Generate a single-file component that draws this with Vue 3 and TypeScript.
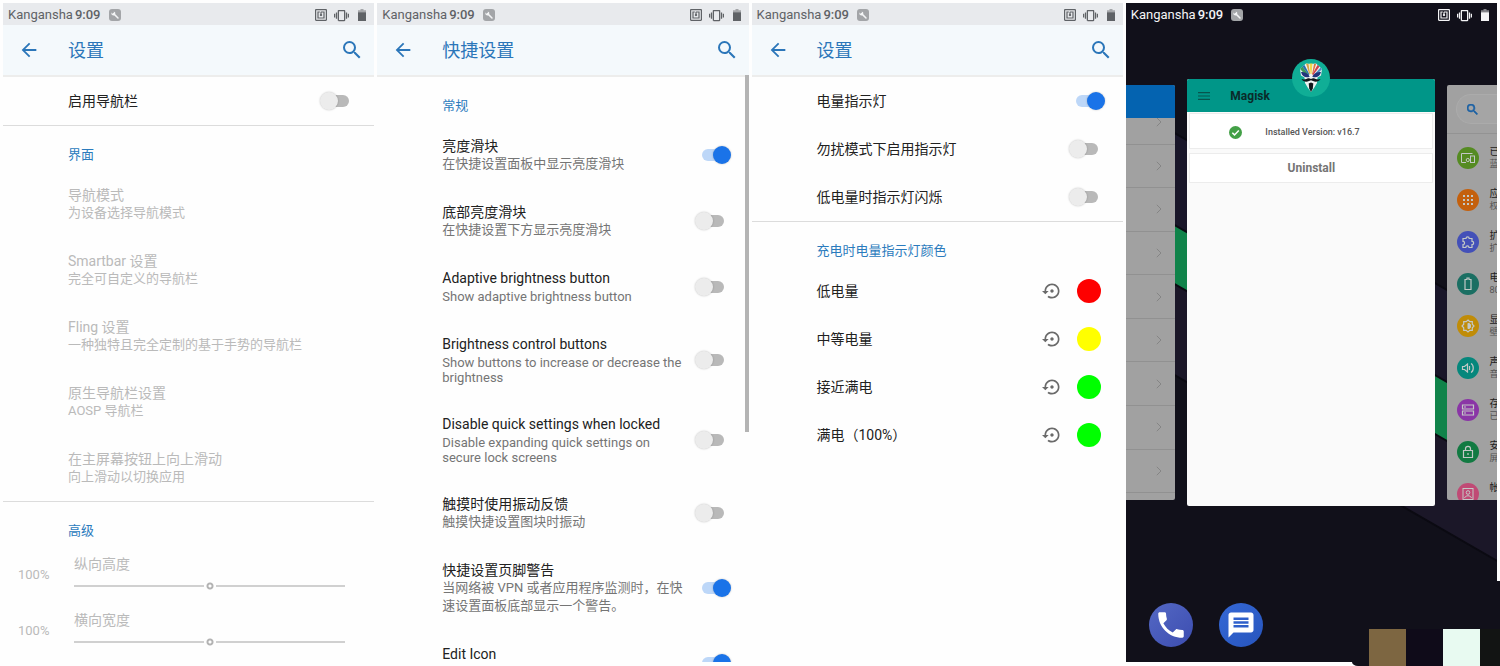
<script setup lang="ts">
import { ref } from 'vue'

interface Toggle {
  title: string
  summary?: string
  on: boolean
}

interface StatusTone {
  dark: boolean
}

const bars = [
  { title: '设置' },
  { title: '快捷设置' },
  { title: '设置' },
]

const statusTones: StatusTone[] = [{ dark: false }, { dark: false }, { dark: false }, { dark: true }]

const navEnabled = ref(false)

const navItems = [
  { title: '导航模式', summary: '为设备选择导航模式' },
  { title: 'Smartbar 设置', summary: '完全可自定义的导航栏' },
  { title: 'Fling 设置', summary: '一种独特且完全定制的基于手势的导航栏' },
  { title: '原生导航栏设置', summary: 'AOSP 导航栏' },
  { title: '在主屏幕按钮上向上滑动', summary: '向上滑动以切换应用' },
]

const sliders = ref([
  { id: 'nav-height', title: '纵向高度', value: 100 },
  { id: 'nav-width', title: '横向宽度', value: 100 },
])

const quickToggles = ref<Toggle[]>([
  { title: '亮度滑块', summary: '在快捷设置面板中显示亮度滑块', on: true },
  { title: '底部亮度滑块', summary: '在快捷设置下方显示亮度滑块', on: false },
  { title: 'Adaptive brightness button', summary: 'Show adaptive brightness button', on: false },
  { title: 'Brightness control buttons', summary: 'Show buttons to increase or decrease the brightness', on: false },
  { title: 'Disable quick settings when locked', summary: 'Disable expanding quick settings on secure lock screens', on: false },
  { title: '触摸时使用振动反馈', summary: '触摸快捷设置图块时振动', on: false },
  { title: '快捷设置页脚警告', summary: '当网络被 VPN 或者应用程序监测时，在快速设置面板底部显示一个警告。', on: true },
  { title: 'Edit Icon', on: true },
])

const isLatin = (s: string): boolean => /^[\x20-\x7e]+$/.test(s)

const lightToggles = ref<Toggle[]>([
  { title: '电量指示灯', on: true },
  { title: '勿扰模式下启用指示灯', on: false },
  { title: '低电量时指示灯闪烁', on: false },
])

const colors = [
  { title: '低电量', color: '#fe0000' },
  { title: '中等电量', color: '#ffff00' },
  { title: '接近满电', color: '#00ff00' },
  { title: '满电（100%）', color: '#00ff00' },
]

const settings = [
  { kind: 'devices', color: '#558b22', title: '已', summary: '蓝' },
  { kind: 'apps', color: '#c4600d', title: '应', summary: '权' },
  { kind: 'extension', color: '#4350b8', title: '扩', summary: '扩' },
  { kind: 'battery', color: '#1b6f63', title: '电', summary: '80' },
  { kind: 'display', color: '#c08c08', title: '显', summary: '壁' },
  { kind: 'sound', color: '#06877c', title: '声', summary: '音' },
  { kind: 'storage', color: '#8a35a6', title: '存', summary: '已' },
  { kind: 'lock', color: '#127a42', title: '安', summary: '屏' },
  { kind: 'account', color: '#c04a75', title: '帐', summary: '' },
]
</script>

<template>
  <main class="board">
    <section v-for="(tone, i) in statusTones" :key="i" class="screen" :class="{ home: tone.dark }">
      <svg v-if="tone.dark" class="wallpaper" viewBox="0 0 371 659" preserveAspectRatio="none" aria-hidden="true">
        <rect width="371" height="659" fill="#11101a" />
        <path d="M0 102 371 316V408L0 194z" fill="#191629" />
        <path d="M0 194 371 408V467L0 253z" fill="#10834a" />
        <path d="M0 253 371 467V558L0 344z" fill="#1b1728" />
        <path d="M0 194 371 408M0 253 371 467M0 344 371 558M0 102 371 316" stroke="#0b0a12" stroke-width="2" />
      </svg>

      <header class="status">
        <span class="carrier">Kangansha</span>
        <span class="clock">9:09</span>
        <svg class="badge" viewBox="0 0 12 12" aria-hidden="true">
          <rect width="12" height="12" rx="3" class="badge-bg" />
          <path d="M4.6 4.6 9 9" stroke="#f4f5f6" stroke-width="1.5" stroke-linecap="round" />
          <path d="M2.6 3.4a2 2 0 1 0 2.2-1L5 4 3.9 5z" fill="#f4f5f6" />
        </svg>
        <span class="spacer"></span>
        <svg class="nfc" viewBox="2 2 20 20" aria-hidden="true">
          <path fill="currentColor" d="M20 2H4c-1.1 0-2 .9-2 2v16c0 1.1.9 2 2 2h16c1.1 0 2-.9 2-2V4c0-1.1-.9-2-2-2zm0 18H4V4h16v16zM18 6h-5c-1.1 0-2 .9-2 2v2.28c-.6.35-1 .98-1 1.72 0 1.1.9 2 2 2s2-.9 2-2c0-.74-.4-1.38-1-1.72V8h3v8H8V8h2V6H6v12h12V6z" />
        </svg>
        <svg class="vibrate" viewBox="0 0 24 24" aria-hidden="true">
          <path fill="currentColor" d="M0 15h2V9H0v6zm3 2h2V7H3v10zm19-8v6h2V9h-2zm-3 8h2V7h-2v10zM16.5 3h-9C6.67 3 6 3.67 6 4.5v15c0 .83.67 1.5 1.5 1.5h9c.83 0 1.5-.67 1.5-1.5v-15c0-.83-.67-1.5-1.5-1.5zM16 19H8V5h8v14z" />
        </svg>
        <svg class="power" viewBox="0 0 8 12" aria-hidden="true">
          <path fill="currentColor" opacity=".5" d="M2.5 0h3v1.3H8V4H0V1.3h2.5z" />
          <path fill="currentColor" d="M0 3.4h8V12H0z" />
        </svg>
      </header>

      <header v-if="!tone.dark" class="appbar">
        <button type="button" class="icon-btn back" aria-label="返回">
          <svg viewBox="0 0 24 24" width="22" height="22"><path fill="currentColor" d="M20 11H7.83l5.59-5.59L12 4l-8 8 8 8 1.41-1.41L7.83 13H20v-2z" /></svg>
        </button>
        <h1>{{ bars[i].title }}</h1>
        <button type="button" class="icon-btn" aria-label="搜索">
          <svg viewBox="0 0 24 24" width="24" height="24"><path fill="currentColor" d="M15.5 14h-.79l-.28-.27A6.47 6.47 0 0 0 16 9.5 6.5 6.5 0 1 0 9.5 16c1.61 0 3.09-.59 4.23-1.57l.27.28v.79l5 4.99L20.49 19l-4.99-5zm-6 0C7.01 14 5 11.99 5 9.5S7.01 5 9.5 5 14 7.01 14 9.5 11.99 14 9.5 14z" /></svg>
        </button>
      </header>

      <div v-if="i === 0" class="body">
        <label class="row single">
          <span class="title">启用导航栏</span>
          <input v-model="navEnabled" type="checkbox" role="switch" class="switch" />
        </label>
        <hr />
        <h2>界面</h2>
        <button v-for="item in navItems" :key="item.title" type="button" class="row" disabled>
          <span class="texts">
            <span class="title">{{ item.title }}</span>
            <span class="summary">{{ item.summary }}</span>
          </span>
        </button>
        <hr />
        <h2>高级</h2>
        <div v-for="s in sliders" :key="s.id" class="slider-row">
          <output :for="s.id">{{ s.value }}%</output>
          <div class="slider">
            <label :for="s.id">{{ s.title }}</label>
            <input :id="s.id" v-model.number="s.value" type="range" min="50" max="150" disabled />
          </div>
        </div>
      </div>

      <div v-else-if="i === 1" class="body">
        <h2>常规</h2>
        <label v-for="t in quickToggles" :key="t.title" class="row">
          <span class="texts">
            <span class="title">{{ t.title }}</span>
            <span class="summary" :class="{ latin: isLatin(t.summary ?? '') }">{{ t.summary }}</span>
          </span>
          <input v-model="t.on" type="checkbox" role="switch" class="switch" />
        </label>
        <div class="scrollbar"></div>
      </div>

      <div v-else-if="i === 2" class="body">
        <label v-for="t in lightToggles" :key="t.title" class="row single">
          <span class="title">{{ t.title }}</span>
          <input v-model="t.on" type="checkbox" role="switch" class="switch" />
        </label>
        <hr />
        <h2>充电时电量指示灯颜色</h2>
        <div v-for="c in colors" :key="c.title" class="row single color-row">
          <span class="title">{{ c.title }}</span>
          <button type="button" class="icon-btn reset" :aria-label="'重置' + c.title">
            <svg viewBox="0 0 24 24" width="20" height="20"><path fill="currentColor" d="M14 12c0-1.1-.9-2-2-2s-2 .9-2 2 .9 2 2 2 2-.9 2-2zm-2-9c-4.97 0-9 4.03-9 9H0l4 4 4-4H5c0-3.87 3.13-7 7-7s7 3.13 7 7-3.13 7-7 7c-1.51 0-2.91-.49-4.06-1.3l-1.42 1.44C8.04 20.3 9.94 21 12 21c4.97 0 9-4.03 9-9s-4.03-9-9-9z" /></svg>
          </button>
          <button type="button" class="swatch" :aria-label="c.title" :style="{ backgroundColor: c.color }"></button>
        </div>
      </div>

      <template v-else>
        <div class="recents">
          <article class="card side">
            <div class="blue-bar"></div>
            <ul class="chevrons">
              <li v-for="n in 9" :key="n">
                <svg viewBox="0 0 6 10" width="6" height="10" aria-hidden="true"><path d="M.8.8 5 5 .8 9.2" fill="none" stroke="#858585" /></svg>
              </li>
            </ul>
          </article>

          <article class="card magisk">
            <svg class="app-icon" viewBox="0 0 38 38" aria-hidden="true">
              <circle cx="19" cy="19" r="19" fill="#10ae96" />
              <path d="M8 10 14 4.500 19 5l5-.5L30 10l-1 6.500-3.500 2L25 24l-3 5-3 4-3-4-3-5-.5-5.500L9 16.500z" fill="#eef3f2" />
              <path d="m8 10 2.500-2.500L17 16l-2 1.500z" fill="#3f9a5a" />
              <path d="M10.500 7.500 12.500 6l5 9.500-.8.500z" fill="#2c6fae" />
              <path d="M14 4.500 16.500 5l1.700 10-1.200-.5z" fill="#d9a640" />
              <path d="M17.500 4.500h3L19.500 15h-1z" fill="#f0d94e" />
              <path d="m22 5 2.200-.5-3.200 10.500-1 .5z" fill="#e0763a" />
              <path d="m25.500 6 2 1.500-6.500 9-.5-1.500z" fill="#cf3f4b" />
              <path d="m28.500 8.500 1.500 1.700-7 7-1.300-1z" fill="#4f8fc0" />
              <path d="M9 13c4 0 7 1.200 8.700 4.800-3.700 1.400-7.500.2-8.700-4.800z" fill="#22347c" />
              <path d="M29 13c-4 0-7 1.200-8.700 4.800 3.700 1.400 7.500.2 8.700-4.800z" fill="#22347c" />
              <path d="M9.500 20c2 .8 3.500.5 5.500-.3 1.500-.6 2.700-.5 4 .4 1.300-.9 2.500-1 4-.4 2 .8 3.500 1.100 5.500.3-1.500 2.800-5 3.300-7.500 2l-2-.7-2 .7c-2.500 1.300-6 .8-7.500-2z" fill="#10171a" />
              <path d="M16.700 24.500 19 23.500l2.300 1-.5 5L19 33l-1.800-3.500z" fill="#10171a" />
            </svg>
            <div class="teal-bar">
              <svg viewBox="0 0 12 8" width="12" height="8" aria-hidden="true"><path d="M0 .7h12M0 4h12M0 7.300h12" stroke="#07544d" stroke-width="1.200" /></svg>
              <strong>Magisk</strong>
            </div>
            <div class="tile version">
              <svg viewBox="0 0 13 13" width="13" height="13" aria-hidden="true"><circle cx="6.500" cy="6.500" r="6.500" fill="#43a047" /><path d="m3.300 6.700 2.200 2.200 4.300-4.500" fill="none" stroke="#fff" stroke-width="1.500" /></svg>
              <span>Installed Version: v16.7</span>
            </div>
            <button type="button" class="tile uninstall">Uninstall</button>
          </article>

          <article class="card side settings">
            <div class="search-head">
              <div class="pill">
                <svg viewBox="3 3 18 18" width="11" height="11" aria-hidden="true"><path fill="#1d62a5" stroke="#1d62a5" d="M15.5 14h-.79l-.28-.27A6.47 6.47 0 0 0 16 9.5 6.5 6.5 0 1 0 9.5 16c1.61 0 3.09-.59 4.23-1.57l.27.28v.79l5 4.99L20.49 19l-4.99-5zm-6 0C7.01 14 5 11.99 5 9.5S7.01 5 9.5 5 14 7.01 14 9.5 11.99 14 9.5 14z" /></svg>
              </div>
            </div>
            <ul class="entries">
              <li v-for="s in settings" :key="s.kind">
                <svg viewBox="0 0 22 22" width="22" height="22" fill="none" stroke="#c3c8c6" aria-hidden="true">
                  <circle cx="11" cy="11" r="11" :fill="s.color" stroke="none" />
                  <template v-if="s.kind === 'devices'">
                    <path d="M15.500 6.500h-11v9H9" />
                    <circle cx="10.800" cy="13" r="1.600" />
                    <rect x="13.500" y="9" width="4" height="6.500" />
                  </template>
                  <path v-else-if="s.kind === 'apps'" d="M6 7h2m2 0h2m2 0h2M6 11h2m2 0h2m2 0h2M6 15h2m2 0h2m2 0h2" stroke-width="2" />
                  <path v-else-if="s.kind === 'extension'" d="M6 7.500h3a1.600 1.600 0 1 1 3.200 0H15v2.800a1.700 1.700 0 1 1 0 3.400V16.500h-3a1.600 1.600 0 0 0-3.200 0H6v-3a1.600 1.600 0 0 0 0-3.200z" stroke-width="1.200" />
                  <path v-else-if="s.kind === 'battery'" d="M8 6.500h2V5h2v1.500h2v10H8z" stroke-width="1.200" />
                  <template v-else-if="s.kind === 'display'">
                    <path d="m11 5 1.800 1.700h2.500v2.500L17 11l-1.700 1.800v2.500h-2.500L11 17l-1.800-1.700H6.700v-2.500L5 11l1.700-1.800V6.700h2.500z" stroke-width="1.200" />
                    <path d="M11 8.300a2.700 2.700 0 0 1 0 5.400z" fill="#c3c8c6" />
                  </template>
                  <path v-else-if="s.kind === 'sound'" d="M5.500 9.500h2l3-2.500v8l-3-2.500h-2zM12.500 9v4M14 6.500c3 1.500 3 7.500 0 9" stroke-width="1.200" />
                  <path v-else-if="s.kind === 'storage'" d="M5.500 6h11v4h-11zM5.500 12h11v4h-11zM7 8h2M7 14h2" stroke-width="1.200" />
                  <path v-else-if="s.kind === 'lock'" d="M6.500 9.500h9v7h-9zM8.500 9.500V7.800a2.500 2.500 0 0 1 5 0v1.700M11 12v2" stroke-width="1.200" />
                  <template v-else>
                    <rect x="6" y="5.500" width="10" height="11" />
                    <circle cx="11" cy="9.500" r="1.800" />
                    <path d="M7.500 15c1-3 6-3 7 0" />
                  </template>
                </svg>
                <span class="entry-text"><b>{{ s.title }}</b><small>{{ s.summary }}</small></span>
              </li>
            </ul>
          </article>
        </div>

        <nav class="dock">
          <button type="button" class="phone" aria-label="电话">
            <svg viewBox="0 0 24 24" width="34" height="34"><path fill="#fff" d="M6.620 10.790c1.440 2.830 3.760 5.140 6.590 6.590l2.200-2.200c.27-.27.67-.36 1.020-.24 1.120.37 2.330.57 3.570.57.55 0 1 .45 1 1V20c0 .55-.45 1-1 1-9.390 0-17-7.610-17-17 0-.55.45-1 1-1h3.500c.55 0 1 .45 1 1 0 1.250.2 2.450.57 3.570.11.35.03.74-.25 1.020l-2.200 2.200z" /></svg>
          </button>
          <button type="button" class="message" aria-label="信息">
            <svg viewBox="0 0 24 24" width="30" height="30"><path fill="#fff" d="M20 2H4c-1.100 0-2 .9-2 2v18l4-4h14c1.100 0 2-.9 2-2V4c0-1.100-.9-2-2-2zM6 9h12v2H6V9zm12 5H6v-2h12v2zm0-6H6V6h12v2z" /></svg>
          </button>
        </nav>
      </template>
    </section>

    <div class="corner" aria-hidden="true">
      <i class="sand"></i><i class="night"></i><i class="mint"></i><i class="coal"></i>
    </div>
  </main>
</template>

<style>
body {
  margin: 0;
  background: #fefefe;
}
</style>

<style scoped>
.board {
  position: relative;
  display: grid;
  grid-template-columns: repeat(4, minmax(0, 1fr));
  gap: 3px;
  box-sizing: border-box;
  height: 100vh;
  padding: 3px 3px 4px;
  overflow: hidden;
  font-family: Roboto, "Noto Sans CJK SC", sans-serif;
  color: #212121;
}

button {
  border: 0;
  padding: 0;
  background: none;
  font: inherit;
  color: inherit;
  text-align: left;
}

svg {
  display: block;
  flex: none;
}

.screen {
  position: relative;
  display: flex;
  flex-direction: column;
  min-height: 0;
  overflow: hidden;
  background: #fefefe;
}

/* status bar */
.status {
  position: relative;
  display: flex;
  align-items: center;
  box-sizing: border-box;
  flex: none;
  height: 22px;
  padding: 2px 8px 0 5px;
  background: #e8eaed;
  color: #5f6266;
  font-size: 13px;
  line-height: 20px;
}

.clock {
  margin: 0 8px 0 2px;
  font-weight: 500;
}

.badge {
  width: 12px;
  height: 12px;
}

.badge-bg {
  fill: #a3a5a8;
}

.spacer {
  flex: 1;
}

.nfc {
  width: 12px;
  height: 12px;
}

.vibrate {
  width: 15px;
  height: 15px;
  margin: 0 9px 0 7px;
}

.power {
  width: 8px;
  height: 12px;
}

.home .status {
  background: none;
  color: #f4f4f6;
}

/* app bar */
.appbar {
  display: flex;
  align-items: center;
  flex: none;
  height: 50px;
  padding: 0 10px 0 15px;
  border-bottom: 2px solid #ededec;
  background: #f4f9fc;
  color: #2b76b9;
}

.icon-btn {
  flex: none;
}

.appbar h1 {
  flex: 1;
  margin: 0 0 0 28px;
  padding-top: 2px;
  font-size: 18px;
  font-weight: 400;
  line-height: 24px;
}

/* preference lists */
.body {
  position: relative;
  flex: 1;
  min-height: 0;
}

h2 {
  margin: 0;
  padding: 20px 18px 7px 65px;
  color: #2b7bbd;
  font-size: 13px;
  font-weight: 400;
  line-height: 18px;
}

hr {
  height: 1px;
  margin: 0;
  border: 0;
  background: #dcdcdc;
}

.row {
  display: flex;
  align-items: center;
  box-sizing: border-box;
  width: 100%;
  min-height: 66px;
  padding: 15px 18px 15px 65px;
}

.row.single {
  min-height: 48px;
  padding-top: 0;
  padding-bottom: 0;
}

.row .texts {
  flex: 1;
}

.row .title {
  display: block;
  flex: 1;
  font-size: 14px;
  line-height: 18px;
}

.row .summary {
  display: block;
  box-sizing: border-box;
  max-width: 244px;
  min-height: 18px;
  color: #757575;
  font-size: 13px;
  line-height: 18px;
}

.row .summary.latin {
  padding-top: 2px;
  line-height: 15px;
}

.row:disabled,
.row:disabled .summary {
  color: #bababa;
}

.switch {
  position: relative;
  flex: none;
  width: 36px;
  height: 18px;
  margin: 0 0 0 8px;
  appearance: none;
}

.switch::before {
  content: "";
  position: absolute;
  inset: 3px 7px;
  border-radius: 6px;
  background: #b9b9b9;
}

.switch::after {
  content: "";
  position: absolute;
  top: 0;
  left: 0;
  width: 18px;
  height: 18px;
  border-radius: 50%;
  background: #ececec;
  box-shadow: 0 0 2px rgba(0, 0, 0, 0.25);
}

.switch:checked::before {
  background: #bdd7f8;
}

.switch:checked::after {
  left: 18px;
  background: #1a73e8;
}

.slider-row {
  display: flex;
  align-items: center;
  height: 56px;
  padding: 0 29px 0 15px;
  color: #bababa;
}

.slider-row output {
  width: 56px;
  font-size: 13px;
  line-height: 18px;
}

.slider {
  flex: 1;
  padding-bottom: 3px;
}

.slider label {
  display: block;
  margin-bottom: 7px;
  font-size: 14px;
  line-height: 18px;
}

.slider input {
  display: block;
  width: 100%;
  height: 12px;
  margin: 0;
  appearance: none;
  background: none;
}

.slider input::-webkit-slider-runnable-track {
  height: 12px;
  background: linear-gradient(#d0d0d0, #d0d0d0) center / 100% 2px no-repeat;
}

.slider input::-webkit-slider-thumb {
  appearance: none;
  width: 12px;
  height: 12px;
  background: radial-gradient(circle, #fefefe 0 1px, #b3b3b3 2px 3px, #fefefe 4px);
}

.scrollbar {
  position: absolute;
  top: -2px;
  right: 0;
  width: 4px;
  height: 357px;
  background: #b4b4b4;
}

.reset {
  margin-right: 15px;
  color: #6a6a6a;
}

.swatch {
  flex: none;
  width: 24px;
  height: 24px;
  margin-right: 4px;
  border-radius: 50%;
}

/* recent apps */
.wallpaper {
  position: absolute;
  inset: 0;
  width: 100%;
  height: 100%;
}

.recents {
  position: relative;
  display: grid;
  grid-template-columns: 1fr 5fr 1fr;
  align-items: center;
  gap: 12px;
  height: 427px;
  padding-top: 54px;
}

.card {
  position: relative;
  display: flex;
  flex-direction: column;
  min-width: 0;
  height: 427px;
  border-radius: 2px;
}

.card ul {
  margin: 0;
  padding: 0;
  list-style: none;
}

.side {
  height: 415px;
  overflow: hidden;
  border-radius: 0 2px 2px 0;
  background: #a1a1a1;
}

.settings {
  border-radius: 2px 0 0 2px;
}

.blue-bar {
  position: relative;
  z-index: 1;
  flex: none;
  height: 33px;
  background: #0463b0;
}

.card .chevrons {
  display: flex;
  flex: 1;
  flex-direction: column;
  margin: -17px 0 7px;
}

.chevrons li {
  display: flex;
  flex: 1;
  align-items: center;
  justify-content: flex-end;
  padding-right: 13px;
  border-bottom: 1px solid #919191;
}

.magisk {
  background: #fafafa;
}

.app-icon {
  position: absolute;
  top: -20px;
  left: calc(50% - 19px);
  z-index: 1;
  width: 38px;
  height: 38px;
}

.teal-bar {
  display: flex;
  align-items: center;
  flex: none;
  gap: 20px;
  height: 33px;
  padding: 0 11px;
  border-radius: 2px 2px 0 0;
  background: #009688;
  color: #0a2b2a;
  font-size: 12px;
}

.teal-bar strong {
  font-weight: 700;
}

.tile {
  display: flex;
  align-items: center;
  box-sizing: border-box;
  margin: 1px 2px 4px;
  border: 1px solid #ececec;
  background: #fff;
  font-weight: 700;
}

.version {
  gap: 23px;
  height: 36px;
  padding: 2px 0 0 39px;
  color: #555;
  font-size: 9px;
  font-weight: 500;
}

.uninstall {
  justify-content: center;
  height: 30px;
  margin-top: 0;
  color: #757575;
  font-size: 12px;
  font-weight: 700;
}

.search-head {
  flex: none;
  padding: 9px 0 9px 9px;
  border-bottom: 1px solid #939393;
}

.pill {
  display: flex;
  align-items: center;
  height: 28px;
  padding-left: 10px;
  border: 1px solid #ababab;
  border-right: 0;
  border-radius: 15px 0 0 15px;
  background: #a5a5a5;
}

.entries li {
  display: flex;
  align-items: center;
  height: 42px;
  padding-left: 10px;
}

.card .entries {
  margin-top: 3px;
}

.entry-text {
  flex: none;
  margin-left: 10px;
  color: #222;
}

.entry-text b,
.entry-text small {
  display: block;
  height: 12px;
  font-size: 10px;
  font-weight: 400;
  line-height: 12px;
}

.entry-text small {
  color: #555;
  font-size: 9px;
}

.dock {
  position: relative;
  display: flex;
  gap: 26px;
  margin-top: auto;
  padding: 0 23px 15px;
}

.dock button {
  display: grid;
  place-items: center;
  width: 44px;
  height: 44px;
  border-radius: 50%;
}

.phone {
  background: linear-gradient(135deg, #5468c4, #3c4db0);
}

.message {
  background: linear-gradient(135deg, #3568d6, #2755bd);
}

.corner {
  position: absolute;
  right: 0;
  bottom: 0;
  display: flex;
  align-items: flex-end;
  justify-content: flex-end;
  box-sizing: border-box;
  width: 148px;
  height: 85px;
  border-bottom-left-radius: 6px 4px;
  background: #11101a;
}

.corner i {
  width: 37px;
  height: 37px;
}

.corner .sand {
  background: #7d6641;
}

.corner .night {
  background: #0f0b19;
}

.corner .mint {
  background: #e8faf1;
}

.corner .coal {
  width: 20px;
  background: #121413;
}
</style>
